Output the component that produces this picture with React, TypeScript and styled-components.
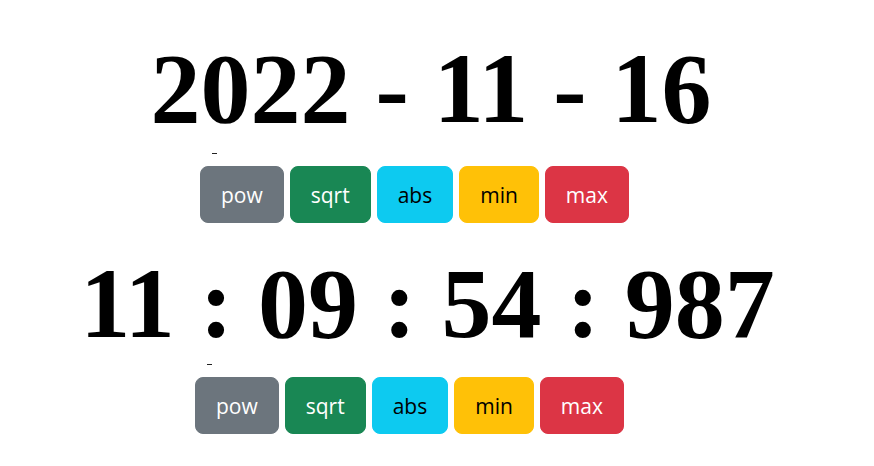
import React from "react";
import styled, { createGlobalStyle } from "styled-components";

const Global = createGlobalStyle`
  html, body { margin: 0; padding: 0; background: #fff; }
  body { font-family: "Liberation Serif", serif; }
`;

const Page = styled.main`
  display: flex;
  flex-direction: column;
  padding: 33px 8px 0 8px;
`;

const Section = styled.section<{ $gapAfter: number }>`
  display: flex;
  flex-direction: column;
  margin-bottom: ${(p) => p.$gapAfter}px;
`;

const Display = styled.h1<{ $shift: number }>`
  margin: 0;
  font-family: "Liberation Serif", "Times New Roman", serif;
  font-weight: 700;
  font-size: 100px;
  line-height: 111px;
  color: #000;
  text-align: center;
  white-space: nowrap;
  padding-right: ${(p) => p.$shift}px;
`;

const Marker = styled.span<{ $left: number; $top: number }>`
  display: block;
  width: 5px;
  height: 1px;
  margin: ${(p) => p.$top}px 0 0 ${(p) => p.$left}px;
  background: #222;
`;

const ButtonRow = styled.div<{ $left: number; $top: number }>`
  display: flex;
  gap: 6px;
  margin: ${(p) => p.$top}px 0 0 ${(p) => p.$left}px;
`;

const colors: Record<string, { bg: string; fg: string }> = {
  secondary: { bg: "#6c757d", fg: "#fff" },
  success: { bg: "#198754", fg: "#fff" },
  info: { bg: "#0dcaf0", fg: "#000" },
  warning: { bg: "#ffc107", fg: "#000" },
  danger: { bg: "#dc3545", fg: "#fff" },
};

const Btn = styled.button<{ $variant: string }>`
  height: 57px;
  padding: 0 20px;
  border: 1px solid ${(p) => colors[p.$variant].bg};
  border-radius: 8px;
  background: ${(p) => colors[p.$variant].bg};
  color: ${(p) => colors[p.$variant].fg};
  font-family: "Open Sans", "Noto Sans", sans-serif;
  font-size: 21px;
  line-height: 30px;
  cursor: pointer;
`;

const buttons = [
  { label: "pow", variant: "secondary" },
  { label: "sqrt", variant: "success" },
  { label: "abs", variant: "info" },
  { label: "min", variant: "warning" },
  { label: "max", variant: "danger" },
];

function Block({
  text,
  shift,
  rowLeft,
  markerLeft,
  markerTop,
  gapAfter,
}: {
  text: string;
  shift: number;
  rowLeft: number;
  markerLeft: number;
  markerTop: number;
  gapAfter: number;
}) {
  return (
    <Section $gapAfter={gapAfter}>
      <Display $shift={shift}>{text}</Display>
      <Marker $left={markerLeft} $top={markerTop} />
      <ButtonRow $left={rowLeft} $top={12}>
        {buttons.map((b) => (
          <Btn key={b.label} $variant={b.variant}>
            {b.label}
          </Btn>
        ))}
      </ButtonRow>
    </Section>
  );
}

export default function App() {
  return (
    <>
      <Global />
      <Page>
        <Block text="2022 - 11 - 16" shift={12} rowLeft={192} markerLeft={204} markerTop={9} gapAfter={25} />
        <Block text="11 : 09 : 54 : 987" shift={19} rowLeft={187} markerLeft={199} markerTop={5} gapAfter={0} />
      </Page>
    </>
  );
}
